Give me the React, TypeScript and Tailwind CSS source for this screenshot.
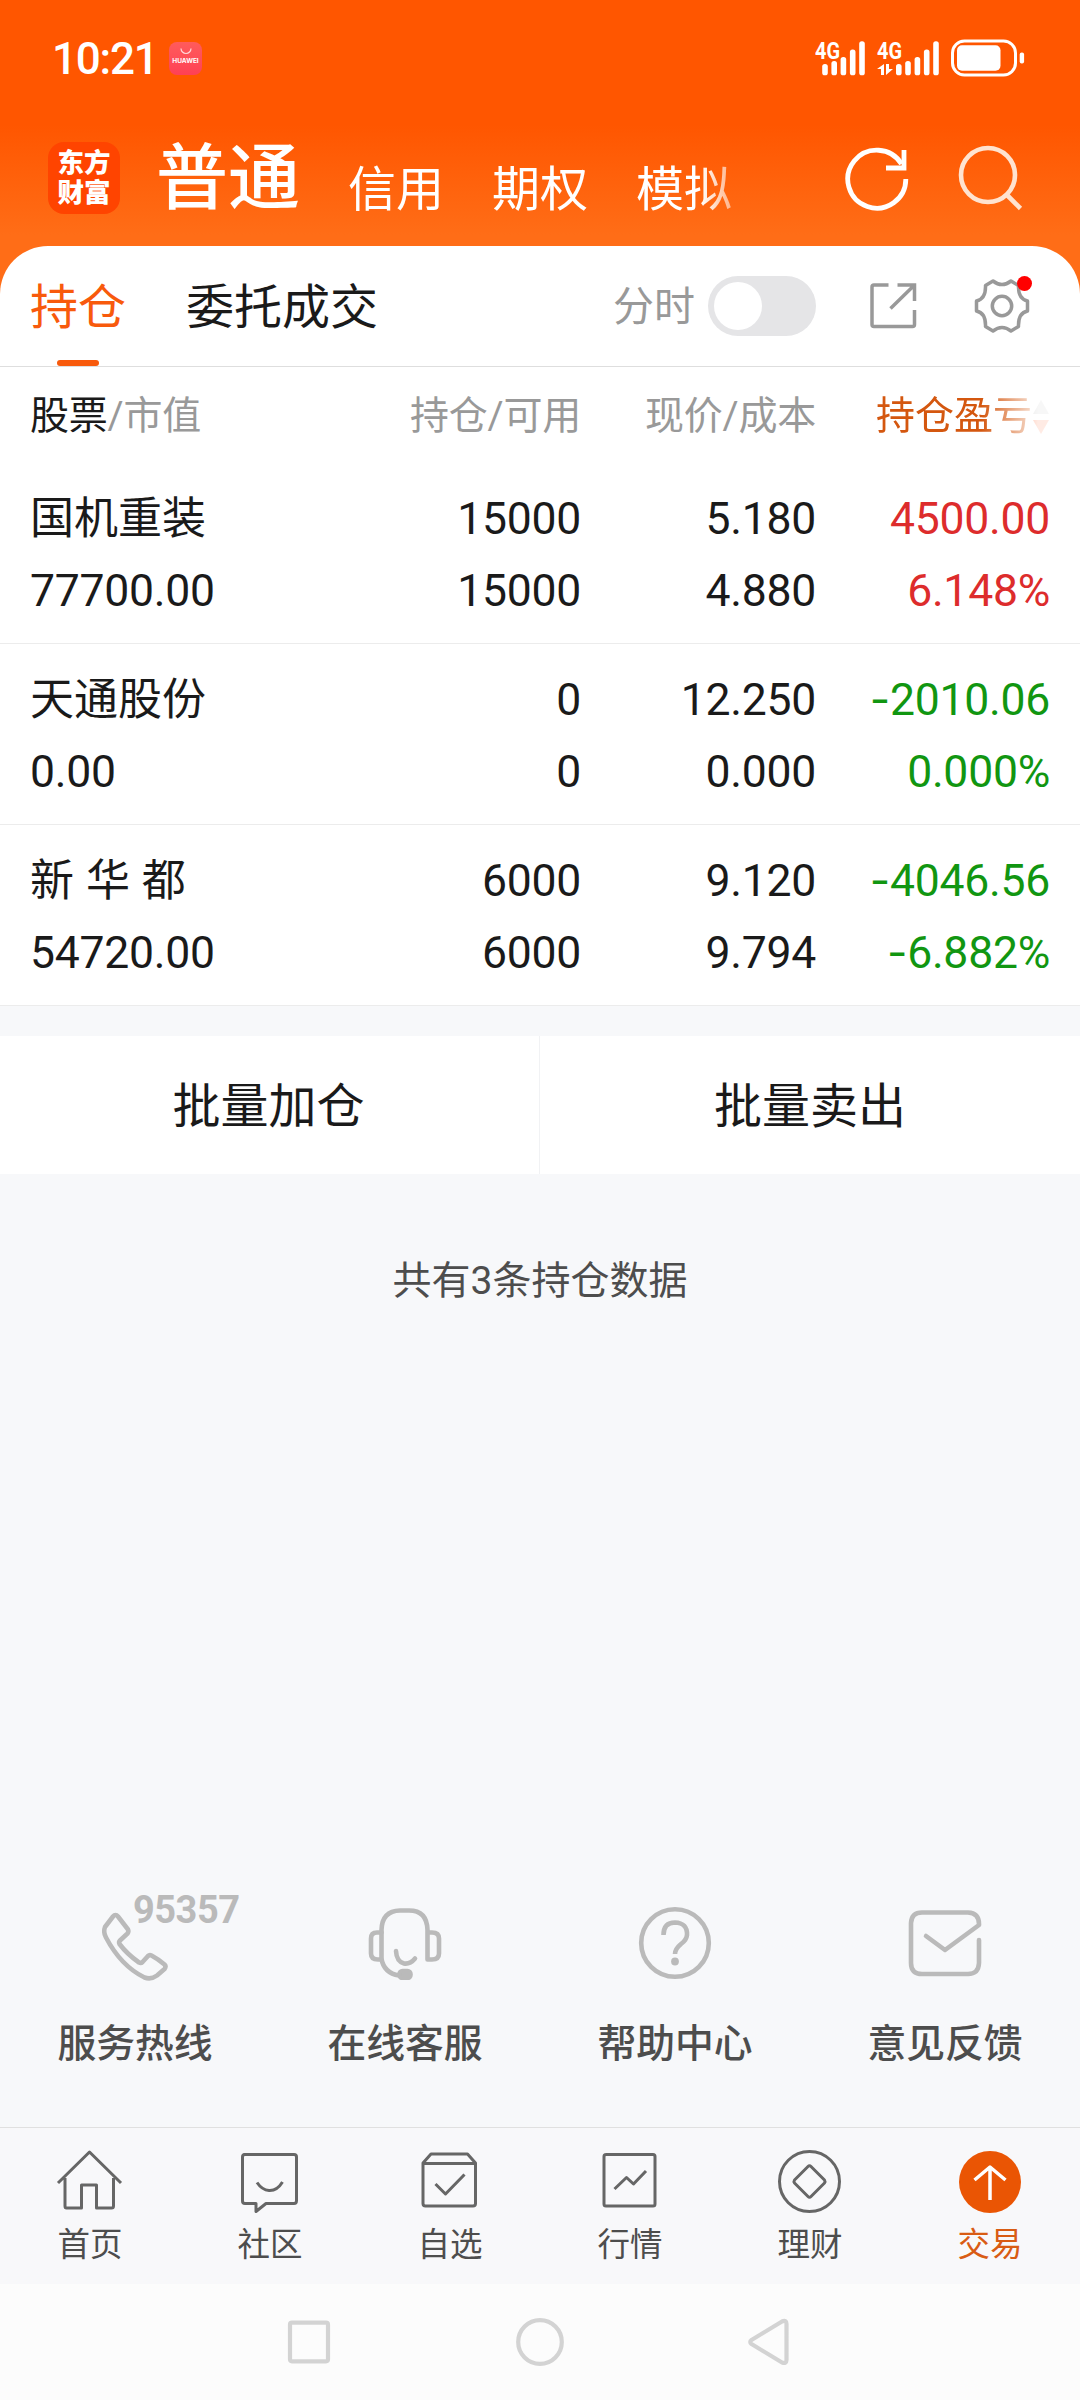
import type { ReactNode } from 'react'

const stocks = [
  { name: '国机重装', value: '77700.00', hold: '15000', usable: '15000', price: '5.180', cost: '4.880', profit: '4500.00', rate: '6.148%', up: true },
  { name: '天通股份', value: '0.00', hold: '0', usable: '0', price: '12.250', cost: '0.000', profit: '-2010.06', rate: '0.000%', up: false },
  { name: '新 华 都', value: '54720.00', hold: '6000', usable: '6000', price: '9.120', cost: '9.794', profit: '-4046.56', rate: '-6.882%', up: false },
]

const Signal = ({ xs }: { xs: number[] }) => {
  const tops = [24.5, 21.5, 17.5, 10, 1.8]
  return (
    <>
      {xs.map((x, i) => (
        <rect key={i} x={x - 2.8} y={tops[i]} width="5.6" height={35.8 - tops[i]} rx="2.6" />
      ))}
    </>
  )
}

const StatusBar = () => {
  return (
    <div className="flex h-[116px] items-center pl-[52px] pr-[55px]">
      <span className="w-[104px] pt-[2px] text-[44px] leading-[44px] font-medium tracking-[-1.2px] text-white">10:21</span>
      <div className="ml-[13px] flex h-[33px] w-[33px] flex-col items-center rounded-[8px] bg-gradient-to-b from-[#ff5b5b] to-[#ff4055] pt-[6px]">
        <svg width="12" height="7" viewBox="0 0 12 7" fill="none" stroke="#ffd9d9" strokeWidth="1.2">
          <path d="M1 0.5a5 5 0 0 0 10 0" />
        </svg>
        <span className="mt-[3px] font-['Inter'] text-[6.5px] leading-[7px] font-bold text-white">HUAWEI</span>
      </div>
      <svg className="ml-auto" width="210" height="39" viewBox="815 37.5 210 39" fill="#fff">
        <text x="815" y="57" fontSize="23" fontWeight="700" textLength="25" lengthAdjust="spacingAndGlyphs">4G</text>
        <text x="877" y="57" fontSize="23" fontWeight="700" textLength="25" lengthAdjust="spacingAndGlyphs">4G</text>
        <g transform="translate(0 38)">
          <Signal xs={[825, 834.2, 843.4, 852.7, 862]} />
          <Signal xs={[898.8, 908, 917.4, 926.7, 936]} />
        </g>
        <path d="M884 62.5v11h-3v-6h-4zM886 62.5h3v5h4l-7 6z" />
        <rect x="952.5" y="39.5" width="63" height="34" rx="12" fill="none" stroke="#fff" strokeWidth="3" />
        <rect x="957" y="43.7" width="43.5" height="25.6" rx="5" />
        <rect x="1019.7" y="51" width="4.4" height="11" rx="2" />
      </svg>
    </div>
  )
}

const Header = () => {
  return (
    <header className="flex h-[130px] pl-12 pr-[57px]">
      <div className="mt-[26px] flex h-[72px] w-[72px] flex-col items-center justify-center rounded-[16px] bg-[#ff4400] text-[26.5px] leading-[30px] font-black text-white">
        <span>东方</span>
        <span>财富</span>
      </div>
      <nav className="ml-[36px] flex w-[620px] items-baseline gap-12 whitespace-nowrap text-[48px] text-white [mask-image:linear-gradient(to_right,#000_545px,rgba(0,0,0,0.35)_585px)]">
        <a className="pt-[3px] text-[72px] leading-[120px] font-medium">普通</a>
        <a className="translate-y-[3px]">信用</a>
        <a className="translate-y-[3px]">期权</a>
        <a className="translate-y-[3px]">模拟</a>
      </nav>
      <svg className="mt-[29px] ml-[68px] shrink-0" width="66" height="72" viewBox="0 0 66 72" fill="none" stroke="#fff" strokeWidth="4.8">
        <path d="M61.8 34A29 29 0 1 1 57.5 19" />
        <path d="M60 5v18H42" />
      </svg>
      <svg className="mt-[29px] ml-[47px] shrink-0" width="66" height="72" viewBox="0 0 66 72" fill="none" stroke="#ffe3d0" strokeWidth="4.6">
        <circle cx="31" cy="30" r="27" />
        <path d="M49.5 49.5l14 14" />
      </svg>
    </header>
  )
}

const TabBar = () => {
  return (
    <div className="flex h-[121px] items-center border-b border-[#dedede] pl-[30px] pr-[50px]">
      <div className="relative flex h-full items-center pt-[3px] text-[48px] text-[#f85a0c]">
        持仓
        <i className="absolute bottom-0 left-[27px] h-[6px] w-[42px] rounded-[3px]  bg-[#f85a0c]"></i>
      </div>
      <div className="ml-[60px] pt-[3px] text-[48px] text-[#1a1a1a]">委托成交</div>
      <div className="ml-auto pt-[3px] text-[41px] text-[#999]">分时</div>
      <div className="ml-[13px] flex h-[60px] w-[108px] items-center rounded-full bg-[#e5e5e7] px-[6px]">
        <i className="h-[48px] w-[48px] rounded-full bg-white"></i>
      </div>
      <svg className="ml-[54px]" width="48" height="48" viewBox="0 0 48 48" fill="none" stroke="#999" strokeWidth="3.5">
        <path d="M18.5 3H4Q2 3 2 5V42.500Q2 44.500 4 44.500H42.500Q44.500 44.500 44.500 42.500V28" />
        <path d="M27.500 3H44.500V19M44 3.500L20.500 26.500" />
      </svg>
      <div className="relative ml-[55px] h-[58px] w-[57px]">
        <svg width="58" height="58" viewBox="-29 -29 58 58" fill="none" stroke="#999" strokeWidth="3.5" strokeLinejoin="round">
          <path d="M-9-25Q0-18 9-25L16.500-20.500Q16-7 25.500-5V5Q16 7 16.500 20.500L9 25Q0 18-9 25L-16.500 20.500Q-16 7-25.500 5V-5Q-16-7-16.500-20.500Z" />
          <circle r="9.700" />
        </svg>
        <i className="absolute -top-[1px] left-[44px] h-[15px] w-[15px] rounded-full bg-[#ff0000]"></i>
      </div>
    </div>
  )
}

const Cell = ({ top, bottom, className }: { top: string; bottom: string; className: string }) => {
  return (
    <div className={className}>
      <p className="h-[72px]"><Amount text={top} /></p>
      <p className="h-[72px]"><Amount text={bottom} /></p>
    </div>
  )
}

// wide minus sign in front of the digits
const Amount = ({ text }: { text: string }) => {
  if (!text.startsWith('-')) return <>{text}</>
  return (
    <>
      <span className="font-['Inter'] leading-none">-</span>
      {text.slice(1)}
    </>
  )
}

const StockTable = () => {
  return (
    <section>
      <div className="grid h-[96px] grid-cols-[300px_251px_235px_234px] items-center px-[30px] pt-[3px] text-right text-[39px] whitespace-nowrap text-[#999]">
        <div className="text-left tracking-[-0.2px]"><span className="text-[#1a1a1a]">股票</span>/市值</div>
        <div className="tracking-[-0.2px]">持仓/可用</div>
        <div className="tracking-[-0.2px]">现价/成本</div>
        <div className="flex items-center pl-[60px] text-[#d4570f] [mask-image:linear-gradient(to_right,#000_165px,rgba(0,0,0,0.12)_222px)]">
          持仓盈亏
          <svg width="18" height="36" viewBox="0 0 18 36">
            <path d="M9 1l8 14H1z" fill="#bbb" />
            <path d="M9 35l8-14H1z" fill="#ff5a1f" />
          </svg>
        </div>
      </div>
      {stocks.map((s) => (
        <div key={s.name} className="grid h-[181px] grid-cols-[300px_251px_235px_234px] border-b border-[#ececec] px-[30px] pt-[20px] text-right text-[44.5px] leading-[72px] tracking-[-0.25px] whitespace-nowrap text-[#1a1a1a]">
          <div className="text-left">
            <p className="h-[72px] text-[44px] tracking-normal [word-spacing:1px]">{s.name}</p>
            <p>{s.value}</p>
          </div>
          <Cell top={s.hold} bottom={s.usable} className="" />
          <Cell top={s.price} bottom={s.cost} className="" />
          <Cell top={s.profit} bottom={s.rate} className={s.up ? 'text-[#dd2c2c]' : 'text-[#119611]'} />
        </div>
      ))}
    </section>
  )
}

const Service = ({ label, children }: { label: string; children: ReactNode }) => {
  return (
    <li className="flex w-[270px] flex-col items-center">
      <div className="relative">{children}</div>
      <span className="mt-[34px] text-[38.8px] leading-[60px] font-medium text-[#4d4d4d]">{label}</span>
    </li>
  )
}

const Services = () => {
  const icon = { width: 76, height: 76, viewBox: '0 0 76 76', fill: 'none', stroke: '#bababa', strokeWidth: 4.6 }
  return (
    <ul className="flex h-[223px]">
      <Service label="服务热线">
        <svg {...icon} className="overflow-visible" strokeLinejoin="round">
          <path d="M16 14.500Q18.500 11.500 21 14.500L31 27.500Q32 29.500 30.500 31.500L23 38.500Q21.500 40 22.500 42Q30 52 42 60.500Q44 61.500 45.500 60L51 54Q52.500 52.500 54.500 53.500Q61 57 67.500 62.500Q69.500 64.500 67.500 67L60 73.500Q54 78 47.500 75.500Q24 64 9 35.500Q6 30 8 25Z" transform="translate(0 -2)" />
        </svg>
        <b className="absolute -top-[14px] left-[36px] text-[38px] leading-[40px] tracking-[-0.5px] text-[#bababa]">95357</b>
      </Service>
      <Service label="在线客服">
        <svg {...icon} strokeLinecap="round" strokeLinejoin="round">
          <path d="M14.500 55.500H11Q4 55.500 4 49.500V34.500Q4 28.500 10 28.500H14.500" />
          <path d="M60.500 28.500H65Q72 28.500 72 34.500V49.500Q72 55.500 65 55.500H60.500V26Q60 6.500 42 6.500H33Q15 7 14.500 26V55Q17 69 32 71.500" />
          <path d="M29 47Q29.500 57.500 37 59.500Q43 60.500 48 54.500" />
          <rect x="32.500" y="67" width="11" height="7" rx="3" fill="#bababa" />
        </svg>
      </Service>
      <Service label="帮助中心">
        <svg {...icon}>
          <circle cx="38" cy="39" r="33.800" />
          <path d="M26.500 31Q26.500 18.500 38 18.500Q50.500 19 50 31Q49.500 36 44 40Q38 45 38 50" />
          <circle cx="38" cy="57.500" r="3.900" fill="#bababa" stroke="none" />
        </svg>
      </Service>
      <Service label="意见反馈">
        <svg {...icon} strokeLinecap="round" strokeLinejoin="round">
          <path d="M72 36V59Q71.500 70 61 70H15Q4 70 4 59V19Q4.500 8.500 15 8.500H61Q72 9 72 20V21L38 46L19 32" />
        </svg>
      </Service>
    </ul>
  )
}

const tabs = [
  {
    label: '首页',
    icon: <path d="M1.500 27L33 -4L64.500 27M8.500 22V50Q8.500 52 10 52H25V29H40V52H55Q57 52 57 50V22" transform="translate(-0.500 5)" />,
  },
  {
    label: '社区',
    icon: <path d="M6.500 3.500H57Q59.500 3.500 59.500 6V49.500Q59.500 52.500 57 52.500H29L19 60.500V52.500H8Q5.500 52.500 5.500 50V6Q5.500 3.500 8 3.500M20 31.500Q25 39 32 39.500Q40 40 45.500 31" />,
  },
  {
    label: '自选',
    icon: <path d="M15 3H51.500L59.500 12V52.500Q59.500 55 57 55H9.500Q7 55 7 52.500V12ZM7 12.500H59.500M19.500 33L29.500 43L48.500 23.500" transform="translate(-1 0)" />,
  },
  {
    label: '行情',
    icon: <path d="M8.500 3.500H56Q58 3.500 58 5.500V53Q58 55 56 55H9Q7 55 7 53V5.500Q7 3.500 9 3.500M17.500 38L29.500 26.500L36.500 33L49 20" />,
  },
  {
    label: '理财',
    icon: (
      <>
        <circle cx="32.500" cy="30.500" r="30" />
        <path d="M31 15.500L17.500 29Q16.500 30.500 17.500 32L31 45.500Q32.500 47 34 45.500L47.500 32Q48.500 30.500 47.500 29L34 15.500Q32.500 14 31 15.500Z" />
      </>
    ),
  },
  {
    label: '交易',
    active: true,
    icon: (
      <>
        <circle cx="33" cy="31" r="31" fill="#ea5504" stroke="none" />
        <path d="M33 49V16M17.500 29L33 16L48.500 29" stroke="#fff" strokeWidth="3.500" />
      </>
    ),
  },
]

const BottomNav = () => {
  return (
    <nav className="flex h-[157px] border-t border-[#e0e0e0] bg-[#f8f8fa]">
      {tabs.map((t) => (
        <a key={t.label} className={'flex w-[180px] flex-col items-center pt-[23px] ' + (t.active ? 'text-[#d95c14]' : 'text-[#4d4d4d]')}>
          <svg className="overflow-visible" width="66" height="62" viewBox="0 0 66 62" fill="none" stroke="#666" strokeWidth="3" strokeLinejoin="round">
            {t.icon}
          </svg>
          <span className="mt-[10px] text-[32.5px] leading-[44px]">{t.label}</span>
        </a>
      ))}
    </nav>
  )
}

const App = () => {
  return (
    <div className="flex h-[2400px] w-[1080px] flex-col overflow-hidden bg-[#f7f8fa] [font-family:Roboto,'Noto_Sans_CJK_SC',sans-serif]">
      <div className="h-[320px] shrink-0 bg-[linear-gradient(to_bottom,#ff5600_0px,#ff5600_125px,#ff6d17_235px,#ff6d17_320px)]">
        <StatusBar />
        <Header />
      </div>
      <main className="-mt-[74px] shrink-0 rounded-t-[48px] bg-white">
        <TabBar />
        <StockTable />
      </main>
      <div className="mt-[30px] flex h-[138px] shrink-0 bg-white text-[48px] text-[#1a1a1a]">
        <button className="w-[540px] border-r border-[#f1f2f4] pt-[3px] pr-[2px]">批量加仓</button>
        <button className="w-[540px] pt-[3px]">批量卖出</button>
      </div>
      <p className="mt-[77px] text-center text-[39px] leading-[60px] text-[#4d4d4d]">共有3条持仓数据</p>
      <div className="mt-auto shrink-0">
        <Services />
        <BottomNav />
        <div className="flex h-[116px] items-center justify-center bg-[#fcfcfc] pr-[2px]">
          <svg width="510" height="50" viewBox="284 2317 510 50" fill="none" stroke="#d3d3d3" strokeWidth="4.200" strokeLinejoin="round">
            <rect x="290" y="2322.700" width="38" height="38.600" rx="2" />
            <circle cx="540" cy="2342" r="21.800" />
            <path d="M751.500 2340Q749 2342 751.500 2344L782 2362.500Q786.500 2364 786.500 2360V2324Q786.500 2319.500 782 2321.500Z" />
          </svg>
        </div>
      </div>
    </div>
  )
}

export default App
